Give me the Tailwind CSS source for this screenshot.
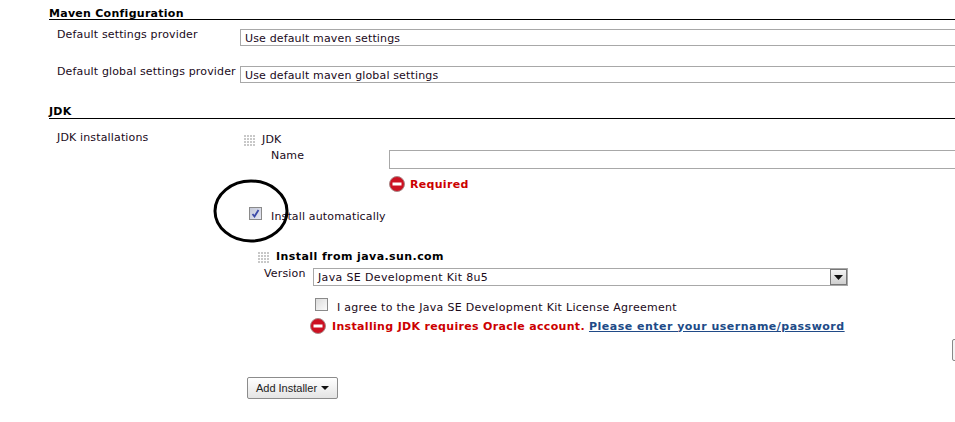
<!doctype html>
<html lang="en">
<head>
  <meta charset="UTF-8">
  <title>Maven Configuration</title>
  <script src="https://cdn.jsdelivr.net/npm/@tailwindcss/browser@4"></script>
</head>
<body class="bg-white">
  <div class="relative w-[955px] h-[422px] overflow-hidden font-['DejaVu_Sans','Liberation_Sans',sans-serif] text-[11px] leading-[13px] tracking-[0.15px] text-[#1a0a1a]">
    <div class="w-[1100px] pl-[49px] pt-[7px]">

      <!-- Maven -->
      <h2 class="text-[11px] leading-[14px] font-bold tracking-[0.27px] text-black border-b border-black h-[13px]">Maven Configuration</h2>
      <div class="flex items-start pl-[8px] mt-[9px]">
        <label class="w-[183px] shrink-0 -mt-[1px]">Default settings provider</label>
        <div class="w-[800px] h-[17px] border border-[#a8a8a8] pl-[4px] leading-[16px] pt-[1px]">Use default maven settings</div>
      </div>
      <div class="flex items-start pl-[8px] mt-[20px]">
        <label class="w-[183px] shrink-0 -mt-[1px]">Default global settings provider</label>
        <div class="w-[800px] h-[17px] border border-[#a8a8a8] pl-[4px] leading-[16px] pt-[1px]">Use default maven global settings</div>
      </div>

      <!-- JDK -->
      <h2 class="text-[11px] leading-[12px] font-bold tracking-[0.27px] text-black border-b border-black h-[13px] mt-[23px]">JDK</h2>
      <div class="flex pl-[8px] mt-[12px]">
        <label class="w-[186px] shrink-0">JDK installations</label>
        <div>
          <div class="flex items-center gap-[7px] h-[13px] mt-[2px]">
            <span class="w-[12px] h-[12px] bg-[#c8c8c8] bg-[linear-gradient(to_right,#fff_1px,transparent_1px),linear-gradient(to_bottom,#fff_1px,transparent_1px)] bg-[length:3px_3px]"></span>
            <span>JDK</span>
          </div>
          <div class="flex pl-[28px] mt-[3px]">
            <label class="w-[118px] shrink-0">Name</label>
            <div class="w-[700px] h-[19px] border border-[#a8a8a8] mt-[1px]"></div>
          </div>
          <div class="flex items-center gap-[5px] pl-[146px] mt-[7px] h-[16px] text-[#cc0000] font-bold tracking-[0.3px]">
            <svg width="16" height="16" viewBox="0 0 16 16"><circle cx="8" cy="8" r="7.5" fill="#cc1122" stroke="#a88" stroke-width="1"/><rect x="3.5" y="6.5" width="9" height="3" fill="#fff"/></svg>
            <span>Required</span>
          </div>
          <div class="flex items-start pl-[6px] mt-[15px] h-[14px]">
            <span class="w-[13px] h-[13px] border border-[#8a8a8a] bg-gradient-to-br from-[#c4c8d8] to-[#e6e8f2] flex items-center justify-center">
              <svg width="9" height="9" viewBox="0 0 9 9"><path d="M1.5 5 L3.5 7.5 L7.5 1" fill="none" stroke="#3c4aa8" stroke-width="1.8"/></svg>
            </span>
            <span class="ml-[9px] mt-[3px]">Install automatically</span>
          </div>

          <div class="flex items-center pl-[14px] mt-[29px] h-[13px]">
            <span class="w-[12px] h-[12px] bg-[#c8c8c8] bg-[linear-gradient(to_right,#fff_1px,transparent_1px),linear-gradient(to_bottom,#fff_1px,transparent_1px)] bg-[length:3px_3px]"></span>
            <span class="ml-[7px] font-bold tracking-[0.42px] text-black">Install from java.sun.com</span>
          </div>
          <div class="flex items-start pl-[21px] mt-[5px]">
            <label class="w-[49px] shrink-0 -mt-[1px]">Version</label>
            <div class="relative w-[535px] h-[18px] border border-[#a8a8a8] pl-[4px] leading-[17px] tracking-[0.35px]">
              Java SE Development Kit 8u5
              <span class="absolute right-[0px] top-[0px] w-[17px] h-[16px] border border-[#777] bg-gradient-to-b from-[#f4f4f4] to-[#cfcfcf] flex items-center justify-center">
                <svg width="9" height="5" viewBox="0 0 9 5"><path d="M0 0 H9 L4.5 5 Z" fill="#111"/></svg>
              </span>
            </div>
          </div>
          <div class="flex items-start pl-[72px] mt-[12px] h-[15px]">
            <span class="w-[13px] h-[13px] border border-[#8a8a8a] bg-gradient-to-br from-[#dcdcdc] to-[#fbfbfb]"></span>
            <span class="ml-[9px] mt-[3px] tracking-[0.29px]">I agree to the Java SE Development Kit License Agreement</span>
          </div>
          <div class="flex items-center pl-[67px] mt-[5px] h-[16px] font-bold text-[#cc0000] tracking-[0.33px]">
            <svg width="16" height="16" viewBox="0 0 16 16"><circle cx="8" cy="8" r="7.5" fill="#cc1122" stroke="#a88" stroke-width="1"/><rect x="3.5" y="6.5" width="9" height="3" fill="#fff"/></svg>
            <span class="ml-[6px]">Installing JDK requires Oracle account.</span>
            <a class="ml-[4px] text-[#204a87] underline tracking-[0.49px]" href="#">Please enter your username/password</a>
          </div>
          <div class="pl-[709px] mt-[5px] h-[22px]">
            <button class="w-[40px] h-[22px] border border-[#888] rounded-[2px] bg-[#f4f4f4]"></button>
          </div>
          <div class="pl-[4px] mt-[16px]">
            <button class="flex items-center justify-center gap-[4px] w-[91px] h-[22px] border border-[#8c8c8c] rounded-[2px] bg-gradient-to-b from-white to-[#e4e4e4] font-['Liberation_Sans',sans-serif] tracking-normal text-[#222]">
              Add Installer
              <svg width="8" height="4" viewBox="0 0 8 4"><path d="M0 0 H8 L4 4 Z" fill="#111"/></svg>
            </button>
          </div>
        </div>
      </div>
    </div>

    <!-- hand drawn circle over the checkbox -->
    <svg class="absolute left-[213px] top-[179px]" width="76" height="64" viewBox="0 0 76 64">
      <ellipse cx="38" cy="32" rx="36" ry="30" fill="none" stroke="#000" stroke-width="3"/>
    </svg>
  </div>
</body>
</html>
